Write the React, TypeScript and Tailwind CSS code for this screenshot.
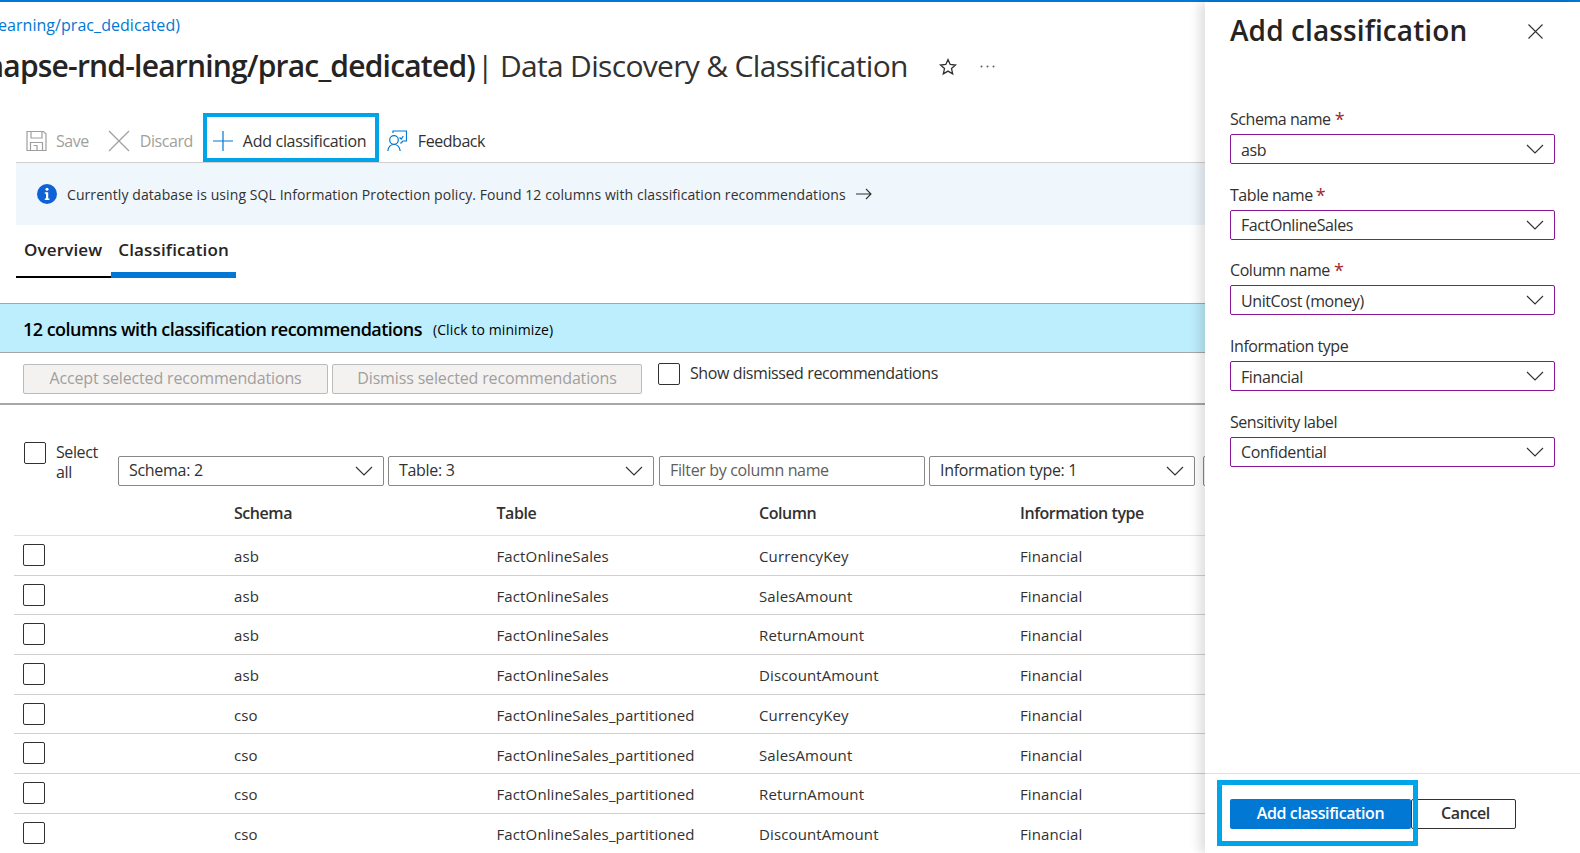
import React from "react";

const Chevron = () => (
  <svg width="18" height="10" viewBox="0 0 18 10" fill="none" stroke="#323130" strokeWidth="1.1" className="shrink-0">
    <path d="M1 1l8 8 8-8" />
  </svg>
);

const Select = ({ label, className }: { label: string; className: string }) => (
  <div className={`flex items-center justify-between border border-[#8a8886] rounded-[2px] pl-[10px] pr-[10px] h-[30px] text-[16px] tracking-[-0.3px] text-[#323130] ${className}`}>
    <span className="-mt-[2px]">{label}</span>
    <Chevron />
  </div>
);

const Field = ({ label, value, req, gap, star }: { label: string; value: string; req?: boolean; gap: string; star?: string }) => (
  <div className={gap}>
    <div className="h-[27px] leading-[24px] flex items-start text-[16px] tracking-[-0.45px] text-[#323130]">
      {label}
      {req && <span className={`text-[#a4262c] text-[18px] leading-[24px] ${star ?? "ml-[4px]"}`}>*</span>}
    </div>
    <div className="flex items-center justify-between border border-[#881798] rounded-[2px] pl-[10px] pr-[10px] h-[30px] text-[16px] tracking-[-0.4px] text-[#323130]">
      <span className="pt-[1px]">{value}</span>
      <Chevron />
    </div>
  </div>
);

const Box = ({ className }: { className: string }) => (
  <div className={`w-[22px] h-[22px] border border-[#323130] rounded-[2px] bg-white shrink-0 ${className}`} />
);

const rows = [
  ["asb", "FactOnlineSales", "CurrencyKey"],
  ["asb", "FactOnlineSales", "SalesAmount"],
  ["asb", "FactOnlineSales", "ReturnAmount"],
  ["asb", "FactOnlineSales", "DiscountAmount"],
  ["cso", "FactOnlineSales_partitioned", "CurrencyKey"],
  ["cso", "FactOnlineSales_partitioned", "SalesAmount"],
  ["cso", "FactOnlineSales_partitioned", "ReturnAmount"],
  ["cso", "FactOnlineSales_partitioned", "DiscountAmount"],
];

export default function App() {
  return (
    <div className="w-[1580px] h-[853px] overflow-hidden bg-white flex flex-col font-['Open_Sans',sans-serif] text-[#323130]">
      <div className="h-[2px] bg-[#0078d4] shrink-0" />
      <div className="flex flex-1 min-h-0">
        <main className="w-[1205px] shrink-0 overflow-hidden">
          <div className="w-[180px] h-[46px] flex justify-end items-center overflow-hidden whitespace-nowrap text-[#0078d4] text-[16px] tracking-[0.05px]">
            synapse-rnd-learning/prac_dedicated)
          </div>
          <div className="flex items-center h-[37px] whitespace-nowrap">
            <div className="w-[475px] flex justify-end overflow-hidden font-semibold text-[30px] tracking-[-0.8px] text-[#252423] -mt-[2px]">
              synapse-rnd-learning/prac_dedicated)
            </div>
            <span className="text-[30px] ml-[2px] tracking-[-0.68px] text-[#323130] -mt-[2px]">| Data Discovery &amp; Classification</span>
            <svg width="20" height="20" viewBox="0 0 20 20" fill="none" stroke="#323130" strokeWidth="1.3" className="ml-[30px]">
              <path d="M10 2.5l2.2 5 5.3.5-4 3.6 1.2 5.3L10 14.100l-4.700 2.800 1.200-5.300-4-3.600 5.300-.5z" />
            </svg>
            <svg width="15" height="3" viewBox="0 0 15 3" fill="#605e5c" className="ml-[22px]">
              <circle cx="1.500" cy="1.500" r="1" />
              <circle cx="7.500" cy="1.500" r="1" />
              <circle cx="13.500" cy="1.500" r="1" />
            </svg>
          </div>
          <div className="h-[77px] pl-[16px] flex flex-col justify-end">
            <div className="flex items-end h-[49px]">
              <div className="flex items-center h-[39px] mb-[2px] pl-[10px] text-[#a19f9d] text-[16px] tracking-[-0.45px]">
                <svg width="21" height="22" viewBox="0 0 21 22" fill="none" stroke="#a19f9d" strokeWidth="1.2">
                  <path d="M1 1.500h16.500L20 4v16.500H1zM5 1.500v6.500h11V1.500M4.500 20.500v-8h12v8M7.500 15.500h3.500v5" />
                </svg>
                <span className="ml-[9px]">Save</span>
                <svg width="22" height="22" viewBox="0 0 22 22" fill="none" stroke="#a19f9d" strokeWidth="1.2" className="ml-[19px]">
                  <path d="M1 1l20 20M21 1L1 21" />
                </svg>
                <span className="ml-[10px]">Discard</span>
              </div>
              <div className="ml-[10px] w-[176px] h-[49px] border-[4px] border-[#00a4e8] flex items-center pl-[6px] pt-[6px] text-[16px] tracking-[-0.3px]">
                <svg width="20" height="20" viewBox="0 0 20 20" fill="none" stroke="#0078d4" strokeWidth="1.2">
                  <path d="M10 0v20M0 10h20" />
                </svg>
                <span className="ml-[10px]">Add classification</span>
              </div>
              <div className="flex items-center h-[39px] mb-[2px] ml-[8px] text-[16px] tracking-[-0.45px]">
                <svg width="20" height="22" viewBox="0 0 20 22" fill="none" stroke="#0078d4" strokeWidth="1.2">
                  <circle cx="7" cy="10" r="4.300" />
                  <path d="M.8 21c.5-4 3-6.500 6.200-6.500s5.600 2.500 6.200 6.500M6 3V1h13.500v10H16l-2.500 2.500M12.500 7.500l1.800 1.500 2-3" />
                </svg>
                <span className="ml-[11px]">Feedback</span>
              </div>
            </div>
          </div>
          <div className="ml-[16px] border-t border-[#d2d0ce] h-[63px] bg-[#eff6fc] flex items-center pl-[21px] text-[14px] tracking-[0.08px]">
            <svg width="20" height="20" viewBox="0 0 20 20" className="shrink-0">
              <circle cx="10" cy="10" r="10" fill="#0f62d6" />
              <path d="M7.800 8.300h3.400v6.200h1.200v1.500H7.800v-1.500h1.200V9.800H7.800z" fill="#fff" />
              <circle cx="10" cy="5.300" r="1.500" fill="#fff" />
            </svg>
            <span className="ml-[10px] whitespace-nowrap">Currently database is using SQL Information Protection policy. Found 12 columns with classification recommendations</span>
            <svg width="16" height="12" viewBox="0 0 16 12" fill="none" stroke="#323130" strokeWidth="1.1" className="ml-[10px]">
              <path d="M0 6h15M10 1l5 5-5 5" />
            </svg>
          </div>
          <div className="ml-[16px] h-[53px] flex items-end">
            <div className="w-[95px] h-[2px] bg-black relative shrink-0" />
            <div className="w-[125px] h-[6px] bg-[#0078d4] shrink-0" />
          </div>
          <div className="-mt-[39px] ml-[24px] h-[22px] flex items-center gap-[16px] text-[17px] font-semibold tracking-[0.15px] text-[#252423] relative">
            <span>Overview</span>
            <span>Classification</span>
          </div>
          <div className="h-[25px] mt-[17px]" />
          <div className="h-[50px] bg-[#bdeefd] border-y border-[#a6a6a6] flex items-center pl-[23px] pt-[3px] text-black whitespace-nowrap">
            <span className="font-semibold text-[18px] tracking-[-0.52px]">12 columns with classification recommendations</span>
            <span className="ml-[11px] text-[14px] tracking-[0.1px]">(Click to minimize)</span>
          </div>
          <div className="h-[52px] border-b-2 border-[#a8a6a8] flex items-start pl-[23px] pt-[11px] gap-[4px] text-[16px] tracking-[-0.15px]">
            <div className="w-[305px] h-[30px] pb-[2px] flex items-center justify-center bg-[#f3f2f1] border border-[#bdbbb9] rounded-[2px] text-[#a19f9d] font-medium">Accept selected recommendations</div>
            <div className="w-[310px] h-[30px] pb-[2px] flex items-center justify-center bg-[#f3f2f1] border border-[#bdbbb9] rounded-[2px] text-[#a19f9d] font-medium">Dismiss selected recommendations</div>
            <div className="ml-[12px] -mt-[1px] flex items-center tracking-[-0.4px]">
              <Box className="" />
              <span className="ml-[10px] -mt-[2px]">Show dismissed recommendations</span>
            </div>
          </div>
          <div className="flex items-start pl-[24px] pt-[37px] text-[16px] tracking-[-0.4px]">
            <Box className="" />
            <div className="w-[72px] pl-[10px] pr-[8px] leading-[20px] shrink-0">Select all</div>
            <div className="flex gap-[4px] mt-[14px] shrink-0">
              <Select label="Schema: 2" className="w-[266px]" />
              <Select label="Table: 3" className="w-[266px]" />
              <div className="w-[266px] h-[30px] ml-[1px] pb-[2px] flex items-center border border-[#8a8886] rounded-[2px] pl-[10px] text-[#605e5c] tracking-[-0.35px]">Filter by column name</div>
              <Select label="Information type: 1" className="w-[266px]" />
              <div className="w-[60px] h-[30px] ml-[4px] border border-[#8a8886] rounded-[2px]" />
            </div>
          </div>
          <div className="ml-[14px] mt-[14px] h-[36px] pb-[10px] border-b border-[#e1dfdd] flex items-center font-semibold text-[16px] tracking-[-0.45px]">
            <div className="w-[220px] shrink-0" />
            <div className="w-[262.500px] shrink-0">Schema</div>
            <div className="w-[262.500px] shrink-0">Table</div>
            <div className="w-[261px] shrink-0">Column</div>
            <div className="shrink-0">Information type</div>
          </div>
          {rows.map((r, i) => (
            <div key={i} className="ml-[14px] h-[39.7px] pt-[2px] border-b border-[#d2d0ce] flex items-center text-[15px] tracking-[0.12px] text-[#323130] whitespace-nowrap">
              <div className="w-[220px] shrink-0 pl-[9px] -mt-[3px]"><Box className="" /></div>
              <div className="w-[262.500px] shrink-0">{r[0]}</div>
              <div className="w-[262.500px] shrink-0">{r[1]}</div>
              <div className="w-[261px] shrink-0">{r[2]}</div>
              <div className="shrink-0">Financial</div>
            </div>
          ))}
        </main>
        <aside className="relative z-10 w-[375px] shrink-0 bg-white shadow-[-6px_0_10px_rgba(0,0,0,0.12)] flex flex-col">
          <div className="px-[25px] flex-1">
            <div className="flex items-center justify-between h-[56px] pr-[12px]">
              <h1 className="text-[28px] font-semibold tracking-[0.1px] text-[#252423] whitespace-nowrap">Add classification</h1>
              <svg width="15" height="15" viewBox="0 0 15 15" fill="none" stroke="#323130" strokeWidth="1.1" className="mt-[3px]">
                <path d="M.5.5l14 14M14.500.5l-14 14" />
              </svg>
            </div>
            <div className="h-[49px]" />
            <Field label="Schema name" value="asb" req gap="" />
            <Field label="Table name" value="FactOnlineSales" req gap="mt-[18.700px]" star="ml-[3px]" />
            <Field label="Column name" value="UnitCost (money)" req gap="mt-[18.700px]" />
            <Field label="Information type" value="Financial" gap="mt-[18.700px]" />
            <Field label="Sensitivity label" value="Confidential" gap="mt-[18.700px]" />
          </div>
          <div className="h-[80px] border-t border-[#e1dfdd] relative pl-[25px] shrink-0">
            <div className="flex items-center mt-[25px] text-[16px] font-semibold tracking-[-0.4px]">
              <div className="relative w-[181px] h-[30px] pb-[2px] bg-[#0078d4] rounded-[2px] text-white flex items-center justify-center">Add classification</div>
              <div className="w-[105px] h-[30px] pb-[2px] border border-[#323130] rounded-[2px] flex items-center justify-center text-[#323130] pl-[4px]">Cancel</div>
            </div>
            <div className="absolute left-[12px] top-[6px] w-[201px] h-[66px] border-[5px] border-[#00a4e8]" />
          </div>
        </aside>
      </div>
    </div>
  );
}
